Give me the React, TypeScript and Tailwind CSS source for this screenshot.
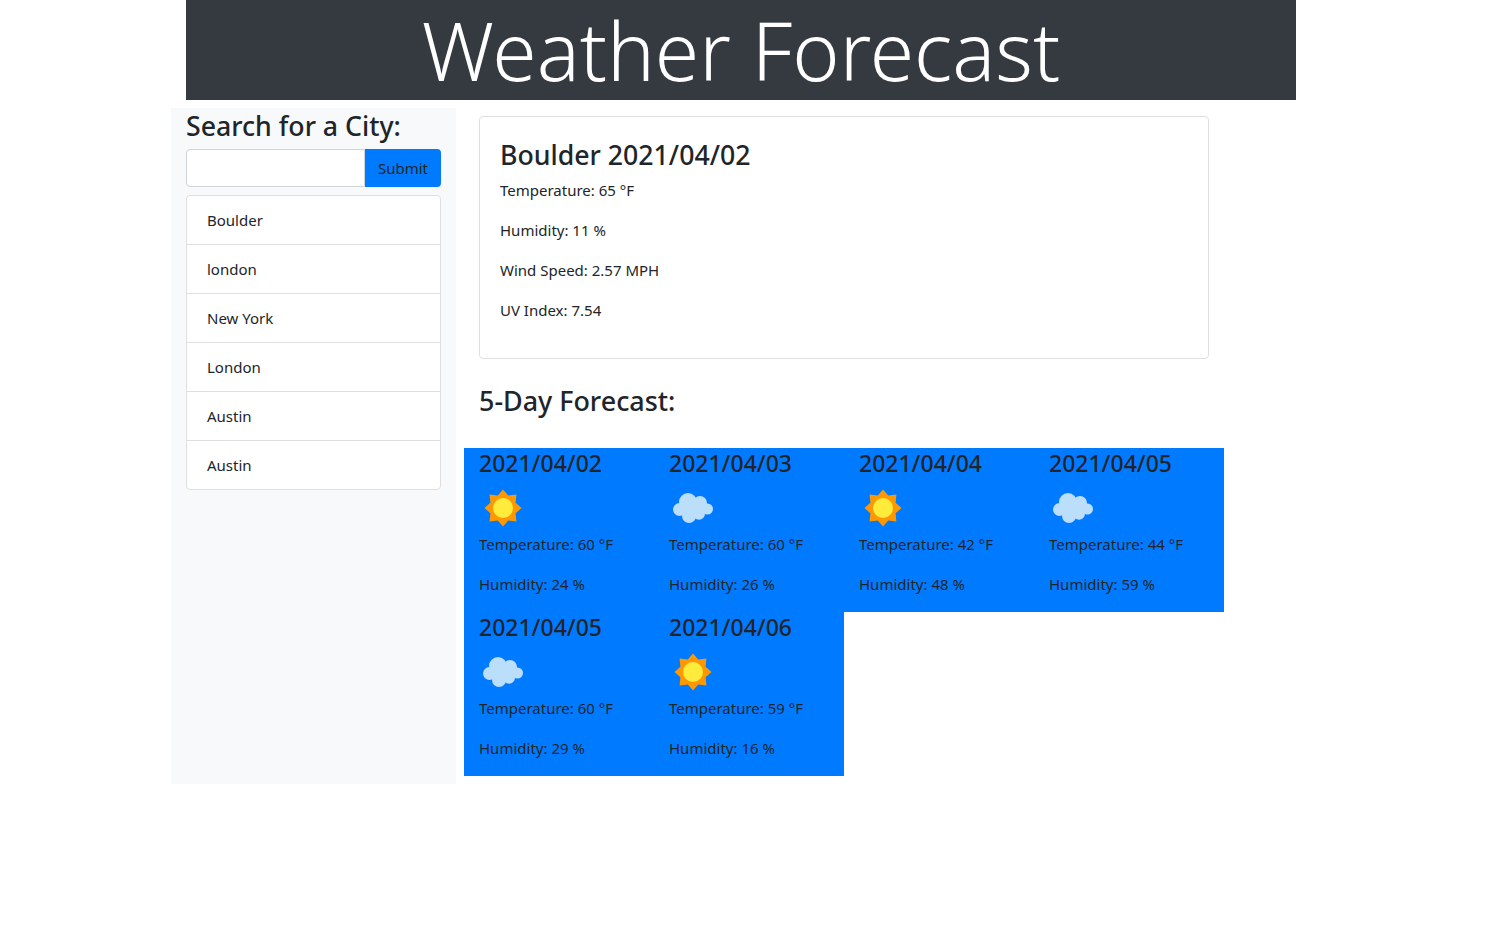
import React from 'react';

const cities = ['Boulder', 'london', 'New York', 'London', 'Austin', 'Austin'];

const forecast = [
  { date: '2021/04/02', icon: 'sun', temp: 60, humidity: 24 },
  { date: '2021/04/03', icon: 'cloud', temp: 60, humidity: 26 },
  { date: '2021/04/04', icon: 'sun', temp: 42, humidity: 48 },
  { date: '2021/04/05', icon: 'cloud', temp: 44, humidity: 59 },
  { date: '2021/04/05', icon: 'cloud', temp: 60, humidity: 29 },
  { date: '2021/04/06', icon: 'sun', temp: 59, humidity: 16 },
];

function SunIcon() {
  return (
    <svg width="50" height="50" viewBox="0 0 50 50" className="block">
      <polygon
        fill="#ff9800"
        points="24,6.5 29.2,12.4 37.4,11.6 36.6,19.8 42.5,25 36.6,30.2 37.4,38.4 29.2,37.6 24,43.5 18.8,37.6 10.6,38.4 11.4,30.2 5.5,25 11.4,19.8 10.6,11.6 18.8,12.4"
      />
      <circle cx="24" cy="25" r="10" fill="#ffeb3b" />
    </svg>
  );
}

function CloudIcon() {
  return (
    <svg width="50" height="50" viewBox="0 0 50 50" className="block">
      <g fill="#bbdefb">
        <circle cx="19" cy="19" r="9" />
        <circle cx="31" cy="20" r="7" />
        <circle cx="10.5" cy="26.5" r="6.5" />
        <circle cx="20" cy="33" r="7" />
        <circle cx="30" cy="30.7" r="6" />
        <circle cx="38.5" cy="26" r="5.5" />
        <rect x="12" y="20" width="26" height="10" />
      </g>
    </svg>
  );
}

export default function App() {
  return (
    <div className="min-h-[930px] bg-white text-[#212529] font-['Noto_Sans',sans-serif] text-[15px] leading-6">
      <header className="ml-[186px] flex h-[100px] w-[1110px] items-center justify-center bg-[#343a40] text-white">
        <h1 className="text-[80.3px] leading-[96px] font-light">Weather Forecast</h1>
      </header>

      <div className="mt-2 ml-[171px] flex">
        <aside className="h-[676px] w-[285px] bg-[#f8f9fa] px-[15px]">
          <h4 className="text-[26.7px] leading-[36px] font-medium">Search for a City:</h4>
          <form className="mt-[5px] flex h-[38px]">
            <input className="h-full min-w-0 flex-1 rounded-l border border-[#ced4da] bg-white" />
            <button type="button" className="h-full w-[76px] rounded-r bg-[#007bff] text-center">
              Submit
            </button>
          </form>
          <ul className="mt-2 overflow-hidden rounded border border-[#dfdfdf] bg-white">
            {cities.map((city, i) => (
              <li
                key={i}
                className="flex h-[49px] items-center border-b border-[#dfdfdf] px-5 last:h-[48px] last:border-b-0"
              >
                {city}
              </li>
            ))}
          </ul>
        </aside>

        <main className="ml-2 w-[760px]">
          <div className="mt-2 ml-[15px] h-[243px] w-[730px] rounded border border-[#dfdfdf] bg-white px-5 pt-5">
            <h4 className="text-[26.7px] leading-[36px] font-medium">Boulder 2021/04/02</h4>
            <div className="flex flex-col gap-4 pt-[5px]">
              <p>Temperature: 65 °F</p>
              <p>Humidity: 11 %</p>
              <p>Wind Speed: 2.57 MPH</p>
              <p>UV Index: 7.54</p>
            </div>
          </div>

          <h3 className="mt-6 ml-[15px] text-[26.9px] leading-[36px] font-medium">5-Day Forecast:</h3>

          <div className="mt-[29px] flex flex-wrap">
            {forecast.map((day, i) => (
              <div key={i} className="h-[164px] w-[190px] bg-[#007bff] px-[15px]">
                <h4 className="text-[23px] leading-[30px] font-medium">{day.date}</h4>
                <div className="mt-[5px]">{day.icon === 'sun' ? <SunIcon /> : <CloudIcon />}</div>
                <p className="-mt-px">Temperature: {day.temp} °F</p>
                <p className="mt-4">Humidity: {day.humidity} %</p>
              </div>
            ))}
          </div>
        </main>
      </div>
    </div>
  );
}
